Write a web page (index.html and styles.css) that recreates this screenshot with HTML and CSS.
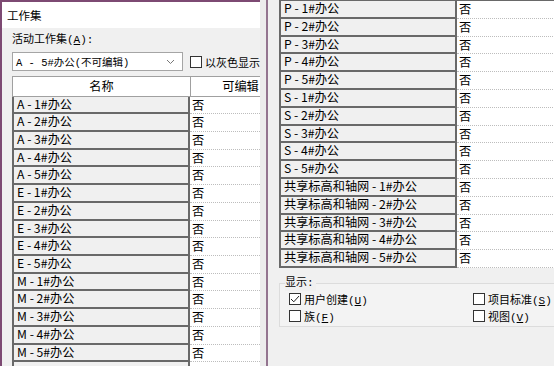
FILE: index.html
```html
<!DOCTYPE html>
<html lang="zh-CN">
<head>
    <meta charset="UTF-8">
    <title>工作集</title>
    <link rel="stylesheet" href="styles.css">
</head>
<body>
<div class="screen">

    <div class="dlg-left">
        <div class="titlebar">工作集</div>
        <div class="dlg-body">
            <div class="field-label">活动工作集(<u>A</u>):</div>
            <div class="active-row">
                <div class="combo">
                    <span>A - 5#办公(不可编辑)</span>
                    <svg class="chev" width="9" height="6" viewBox="0 0 9 6"><path d="M1 1 L4.5 4.5 L8 1" fill="none" stroke="#777" stroke-width="1"/></svg>
                </div>
                <label class="chk"><span class="box"></span><span>以灰色显示</span></label>
            </div>
            <div class="grid grid-left">
                <div class="hd">名称</div><div class="hd">可编辑</div>
                <div class="name">A - 1#办公</div><div class="val">否</div>
                <div class="name">A - 2#办公</div><div class="val">否</div>
                <div class="name">A - 3#办公</div><div class="val">否</div>
                <div class="name">A - 4#办公</div><div class="val">否</div>
                <div class="name">A - 5#办公</div><div class="val">否</div>
                <div class="name">E - 1#办公</div><div class="val">否</div>
                <div class="name">E - 2#办公</div><div class="val">否</div>
                <div class="name">E - 3#办公</div><div class="val">否</div>
                <div class="name">E - 4#办公</div><div class="val">否</div>
                <div class="name">E - 5#办公</div><div class="val">否</div>
                <div class="name">M - 1#办公</div><div class="val">否</div>
                <div class="name">M - 2#办公</div><div class="val">否</div>
                <div class="name">M - 3#办公</div><div class="val">否</div>
                <div class="name">M - 4#办公</div><div class="val">否</div>
                <div class="name">M - 5#办公</div><div class="val">否</div>
                <div class="name"></div><div class="val"></div>
            </div>
        </div>
    </div>

    <div class="gap"></div>
    <div class="divider"></div>

    <div class="dlg-right">
        <div class="grid grid-right">
            <div class="name">P - 1#办公</div><div class="val">否</div>
            <div class="name">P - 2#办公</div><div class="val">否</div>
            <div class="name">P - 3#办公</div><div class="val">否</div>
            <div class="name">P - 4#办公</div><div class="val">否</div>
            <div class="name">P - 5#办公</div><div class="val">否</div>
            <div class="name">S - 1#办公</div><div class="val">否</div>
            <div class="name">S - 2#办公</div><div class="val">否</div>
            <div class="name">S - 3#办公</div><div class="val">否</div>
            <div class="name">S - 4#办公</div><div class="val">否</div>
            <div class="name">S - 5#办公</div><div class="val">否</div>
            <div class="name">共享标高和轴网 - 1#办公</div><div class="val">否</div>
            <div class="name">共享标高和轴网 - 2#办公</div><div class="val">否</div>
            <div class="name">共享标高和轴网 - 3#办公</div><div class="val">否</div>
            <div class="name">共享标高和轴网 - 4#办公</div><div class="val">否</div>
            <div class="name">共享标高和轴网 - 5#办公</div><div class="val">否</div>
        </div>

        <div class="group">
            <div class="legend">显示:</div>
            <div class="group-grid">
                <label class="chk"><span class="box"><svg width="10" height="10" viewBox="0 0 10 10"><path d="M1 5 L3.8 7.8 L9 2" fill="none" stroke="#222" stroke-width="1"/></svg></span><span>用户创建(<u>U</u>)</span></label>
                <label class="chk"><span class="box"></span><span>项目标准(<u>S</u>)</span></label>
                <label class="chk"><span class="box"></span><span>族(<u>F</u>)</span></label>
                <label class="chk"><span class="box"></span><span>视图(<u>V</u>)</span></label>
            </div>
        </div>
    </div>

</div>
</body>
</html>
```

FILE: styles.css
```css
body {
    margin: 0;
    font-family: "Noto Sans CJK SC", "Noto Sans", sans-serif;
    font-size: 12.2px;
    color: #000;
    background-color: #f0f0f0;
    overflow: hidden;
}

.screen {
    display: flex;
    width: 554px;
    height: 366px;
    overflow: hidden;
}

/* left dialog */
.dlg-left {
    width: 258px;
    flex: none;
    border-left: 2px solid #7d4a73;
    border-top: 2px solid #7d4a73;
    display: flex;
    flex-direction: column;
    overflow: hidden;
}

.titlebar {
    height: 26px;
    line-height: 26px;
    padding-left: 5px;
    background-color: #fff;
    font-size: 11.5px;
}

.dlg-body {
    flex: 1;
    padding: 4px 0 0 10px;
    background-color: #f0f0f0;
}

.field-label {
    line-height: 16px;
    font-family: "Liberation Mono", "Noto Sans CJK SC", monospace;
    font-size: 11px;
}

u {
    text-decoration: underline;
    text-underline-offset: 1px;
}

.active-row {
    display: flex;
    align-items: center;
    gap: 7px;
    margin-top: 4px;
    white-space: nowrap;
}

.combo {
    width: 160px;
    height: 17px;
    border: 1px solid #a5a5a5;
    background-color: #fff;
    display: flex;
    align-items: center;
    justify-content: space-between;
    padding: 0 7px 0 3px;
    font-family: "Liberation Mono", "Noto Sans CJK SC", monospace;
    font-size: 10.5px;
}

.chk {
    display: flex;
    align-items: center;
    gap: 3px;
    height: 13px;
    font-family: "Liberation Mono", "Noto Sans CJK SC", monospace;
    font-size: 11px;
    white-space: nowrap;
}

.box {
    width: 10px;
    height: 10px;
    border: 1px solid #333;
    background-color: #fff;
    display: flex;
    align-items: center;
    justify-content: center;
    flex: none;
}

/* grid tables */
.grid {
    display: grid;
    white-space: nowrap;
}

.grid-left {
    margin-top: 5px;
    grid-template-columns: 178px 100px;
    grid-template-rows: 20.5px;
    grid-auto-rows: 17.72px;
}

.grid-right {
    grid-template-columns: 178px 120px;
    grid-auto-rows: 17.8px;
    border-top: 1px solid #696969;
}

.hd {
    background-color: #fff;
    border: 1px solid #a0a0a0;
    border-right: none;
    text-align: center;
    line-height: 19px;
}

.name {
    background-color: #f0f0f0;
    border-left: 2px solid #696969;
    border-right: 2px solid #696969;
    border-bottom: 2px solid #696969;
    padding-left: 3px;
    line-height: 15px;
}

.val {
    background-color: #fff;
    border-bottom: 1px dotted #bdbdbd;
    padding-left: 2px;
    line-height: 16px;
}

/* right dialog */
.gap {
    width: 6px;
    flex: none;
    background-color: #ececec;
}

.divider {
    width: 2px;
    flex: none;
    background-color: #93748f;
}

.dlg-right {
    flex: 1;
    padding-left: 11px;
    overflow: hidden;
}

.group {
    position: relative;
    margin-top: 15px;
    height: 42px;
    border: 1px solid #dcdcdc;
    border-right: none;
    background-color: #f3f3f3;
}

.legend {
    position: absolute;
    top: -8px;
    left: 5px;
    padding-right: 2px;
    background-color: #f0f0f0;
    line-height: 15px;
    font-family: "Liberation Mono", "Noto Sans CJK SC", monospace;
    font-size: 11px;
}

.group-grid {
    display: grid;
    grid-template-columns: 184px auto;
    row-gap: 4px;
    padding: 9px 0 0 9px;
}
```
